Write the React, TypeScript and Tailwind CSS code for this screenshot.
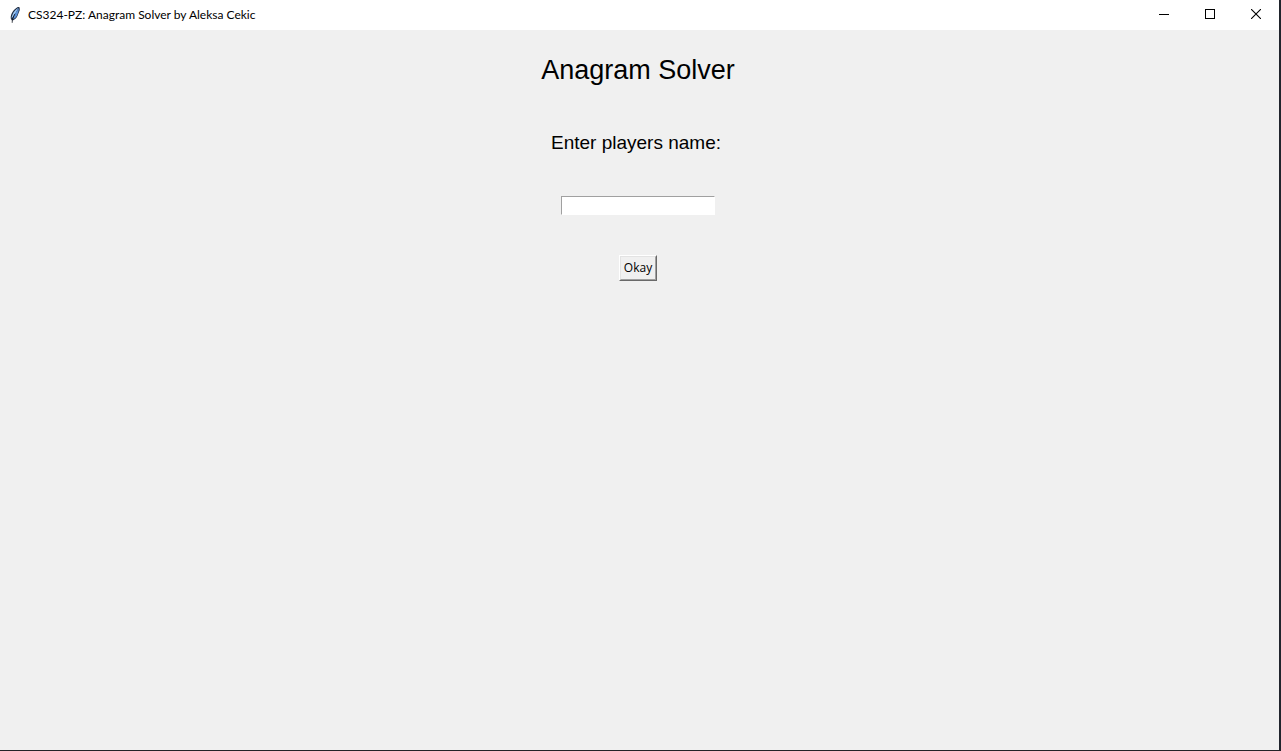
import { useState } from "react";

function FeatherIcon() {
  return (
    <svg width="16" height="16" viewBox="0 0 16 16" aria-hidden="true">
      <path
        d="M12 -0.4C9.6 0.2 6.8 2.6 5.2 5.6C3.8 8 3.4 10.4 4 12.2L5.4 13.8L7 12.8C9.2 11.6 10.4 9.6 11 7.4L12.2 4.6C13 3 13 1 12 -0.4Z"
        fill="#1f2c42"
      />
      <path d="M11.4 0.8C9.2 2 6.8 4.6 5.6 7.4C4.8 9.2 4.6 10.4 4.8 11.4L8.4 6.4Z" fill="#9cc8f6" />
      <path d="M11.7 1C12.2 3.6 10.8 6.6 10 8.4C9.2 10.2 8 11.4 6 12.2L8.2 6.6Z" fill="#5b92da" />
      <path d="M5.2 15.8C5 12.6 6.2 9.6 8 6.8" fill="none" stroke="#10151f" strokeWidth="0.8" />
    </svg>
  );
}

function TitleBar() {
  const control = "flex h-[30px] w-[46px] items-center justify-center pb-[2px] hover:bg-gray-200";
  return (
    <header className="flex h-[30px] items-center bg-white pl-[7px]">
      <FeatherIcon />
      <h1 className="ml-[5px] flex-1 font-['Lato','Noto_Sans',sans-serif] text-[12px] leading-[16px]">
        CS324-PZ: Anagram Solver by Aleksa Cekic
      </h1>
      <div className="flex">
        <button type="button" aria-label="Minimize" className={control}>
          <svg width="10" height="10" viewBox="0 0 10 10" shapeRendering="crispEdges">
            <path d="M0 5h10v1H0z" />
          </svg>
        </button>
        <button type="button" aria-label="Maximize" className={control}>
          <svg width="10" height="10" viewBox="0 0 10 10" shapeRendering="crispEdges">
            <path d="M0.5 0.5h9v9h-9z" fill="none" stroke="black" />
          </svg>
        </button>
        <button type="button" aria-label="Close" className={control}>
          <svg width="10" height="10" viewBox="0 0 10 10">
            <path d="M0 0L10 10M10 0L0 10" fill="none" stroke="black" strokeWidth="1.1" />
          </svg>
        </button>
      </div>
    </header>
  );
}

export default function App() {
  const [name, setName] = useState("");
  return (
    <div className="flex min-h-screen flex-col border-r-2 border-b border-r-[#20242c] border-b-[#232227] bg-[#f0f0f0] text-black">
      <TitleBar />
      <main className="flex flex-1 flex-col items-center pt-6 pr-[3px] font-['Liberation_Sans',Arial,sans-serif]">
        <h2 className="text-[27px] leading-[32px]">Anagram Solver</h2>
        <form
          className="flex flex-col items-center"
          onSubmit={(event) => event.preventDefault()}
        >
          <label htmlFor="player" className="mt-[45px] pr-1 text-[19px] leading-[24px]">
            Enter players name:
          </label>
          <input
            id="player"
            type="text"
            value={name}
            onChange={(event) => setName(event.target.value)}
            className="mt-[41px] h-[19px] w-[154px] border border-t-[#a0a0a0] border-r-white border-b-white border-l-[#a0a0a0] bg-white px-px font-['Lato','Noto_Sans',sans-serif] text-[12px] leading-[16px] outline-none"
          />
          <button
            type="submit"
            className="mt-10 border border-t-white border-r-[#696969] border-b-[#696969] border-l-white bg-[#f0f0f0] font-['Open_Sans','Noto_Sans',sans-serif] text-[12px] leading-[16px]"
          >
            <span className="block border border-t-[#e3e3e3] border-r-[#a0a0a0] border-b-[#a0a0a0] border-l-[#e3e3e3] px-[3px] py-[3px]">
              Okay
            </span>
          </button>
        </form>
      </main>
    </div>
  );
}
